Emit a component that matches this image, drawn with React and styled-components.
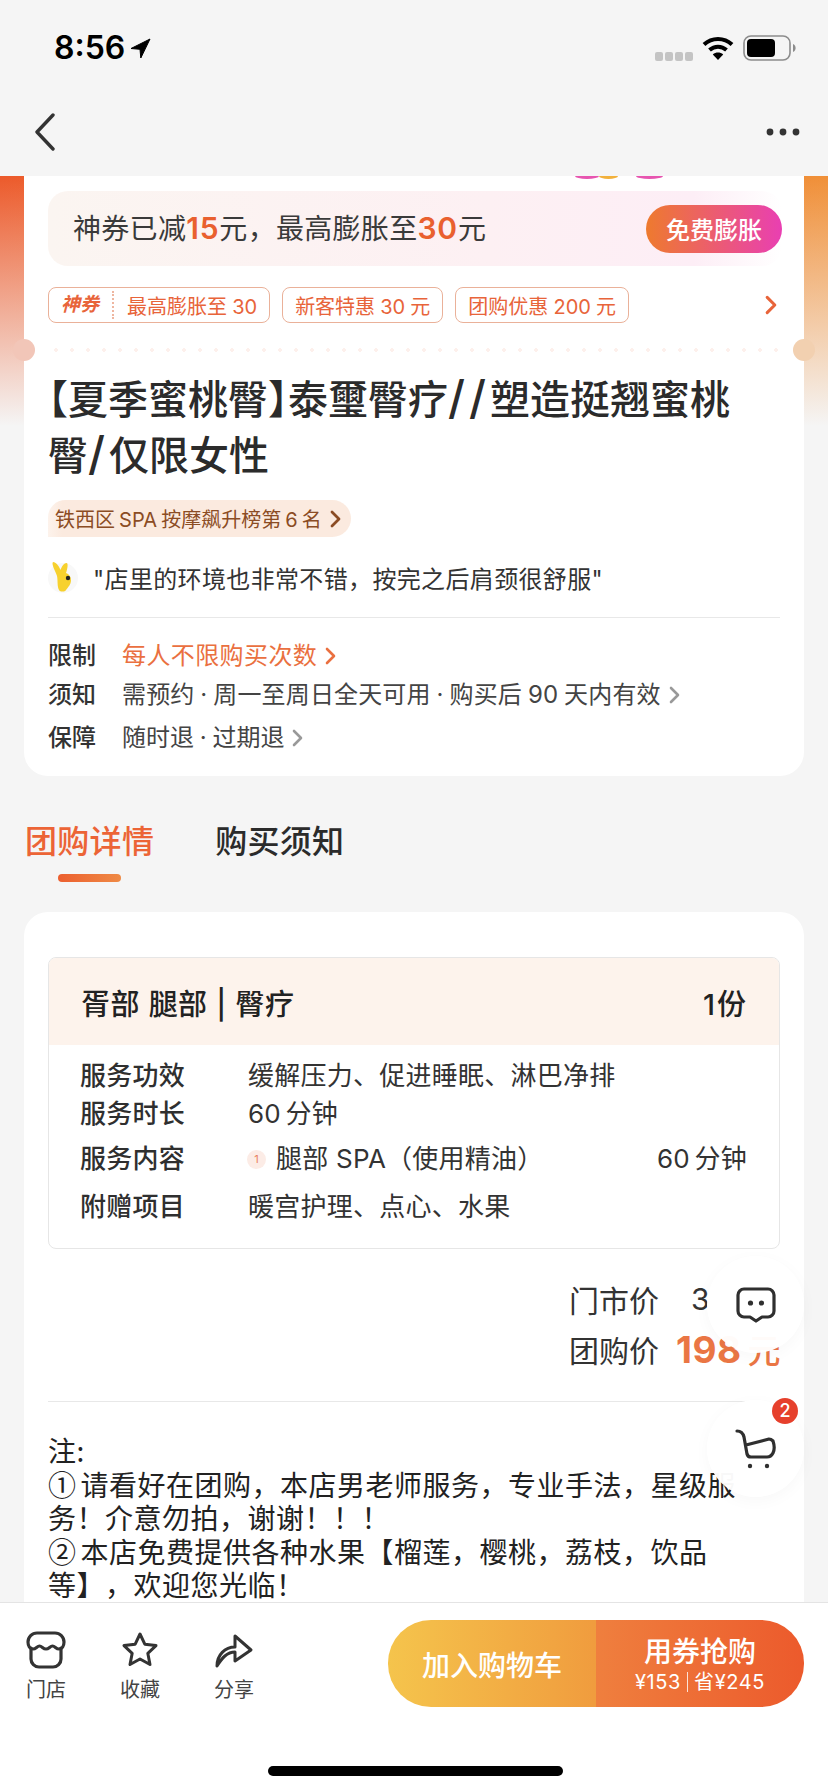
import React from "react";
import styled, { createGlobalStyle } from "styled-components";

const Global = createGlobalStyle`
  html, body { margin: 0; padding: 0; background: #f5f5f5; }
  * { box-sizing: border-box; }
  body { font-family: Inter, "Noto Sans CJK SC", sans-serif; color: #333; }
`;

const Page = styled.div`
  position: relative;
  width: 828px;
  height: 1792px;
  overflow: hidden;
  display: flex;
  flex-direction: column;
  background: #f5f5f5;
`;
const StatusBar = styled.div`
  height: 96px;
  display: flex;
  align-items: center;
  justify-content: space-between;
  padding: 0 32px 0 54px;
`;
const Time = styled.div`
  display: flex;
  align-items: center;
  gap: 5px;
  font: 600 32px/40px Inter, sans-serif;
  color: #000;
`;
const StatusIcons = styled.div`
  display: flex;
  align-items: center;
  gap: 9px;
`;
const Signal = styled.div`
  display: flex;
  gap: 2px;
  margin-top: 16px;
`;
const SignalDot = styled.span`
  width: 8px;
  height: 9px;
  border-radius: 2px;
  background: #c4c4c4;
`;
const NavBar = styled.div`
  height: 80px;
  display: flex;
  align-items: center;
  justify-content: space-between;
  padding: 0 28px 8px 34px;
`;
const Scroll = styled.div`
  flex: 1;
  min-height: 0;
  overflow: hidden;
  padding: 0 24px;
  background:
    linear-gradient(180deg, rgba(245, 245, 245, 0) 0%, #f5f5f5 100%) top / 100% 250px no-repeat,
    linear-gradient(90deg, #ec5a2b 0%, #f09038 100%) top / 100% 250px no-repeat;
`;
const Card = styled.div`
  position: relative;
  background: #fff;
  padding: 0 24px 20px;
  border-radius: 0 0 24px 24px;
`;
const Peek = styled.div`
  height: 3px;
  display: flex;
  justify-content: flex-end;
  padding-right: 117px;
  margin-bottom: 12px;
`;
const PeekBlob = styled.span`
  width: ${(p) => p.$w}px;
  height: 3px;
  border-radius: 0 0 50% 50% / 0 0 100% 100%;
  background: ${(p) => p.$c};
  margin-left: ${(p) => p.$ml || 0}px;
`;
const Banner = styled.div`
  height: 75px;
  display: flex;
  align-items: center;
  justify-content: space-between;
  padding-left: 25px;
  margin-right: -2px;
  border-radius: 20px;
  background: linear-gradient(90deg, #fbf5f1 0%, #fdf0f3 60%, #fdeef6 88%, #ffffff 100%);
`;
const BannerText = styled.div`
  font-size: 28px;
  line-height: 40px;
  letter-spacing: 0.3px;
  color: #3a3a3a;
`;
const BannerNum = styled.span`
  color: #e9602f;
  font-size: 30px;
  font-weight: 600;
  letter-spacing: 0.8px;
`;
const BannerButton = styled.div`
  width: 136px;
  height: 48px;
  border-radius: 24px;
  display: flex;
  align-items: center;
  justify-content: center;
  color: #fff;
  font-size: 24px;
  font-weight: 500;
  background: linear-gradient(90deg, #ee7a2e 0%, #e93fb2 100%);
`;
const TagRow = styled.div`
  margin-top: 21px;
  display: flex;
  align-items: center;
  gap: 12px;
`;
const Tag = styled.div`
  height: 36px;
  display: flex;
  align-items: center;
  padding: 0 12px;
  border: 1px solid #eab199;
  border-radius: 8px;
  font-size: 20px;
  word-spacing: -0.5px;
  color: #e8643a;
  white-space: nowrap;
`;
const TagBrand = styled.span`
  font-weight: 700;
  font-style: italic;
  font-size: 19px;
  margin-right: 13px;
  padding-right: 13px;
  border-right: 2px dotted #eeb6a0;
  line-height: 28px;
`;
const TagChevron = styled.div`
  margin-left: auto;
  margin-right: 3px;
  display: flex;
`;
const Perforation = styled.div`
  height: 4px;
  margin-top: 25px;
  background: radial-gradient(circle, #fdf0ec 0 2px, transparent 2px) 0 0 / 16px 4px repeat-x;
`;
const Notch = styled.span`
  position: absolute;
  top: 163px;
  width: 22px;
  height: 22px;
  border-radius: 50%;
  background: ${(p) => p.$c};
  ${(p) => (p.$right ? "right: -11px;" : "left: -11px;")}
`;
const Title = styled.h1`
  margin: 20px 0 0;
  font-size: 40px;
  line-height: 56px;
  font-weight: 500;
  font-feature-settings: "halt";
  color: #2b2b2b;
`;
const Slash = styled.span`
  font-size: 46px;
  line-height: 40px;
  letter-spacing: 4px;
`;
const RankPill = styled.div`
  margin-top: 16px;
  height: 37px;
  width: 303px;
  padding-left: 7px;
  display: flex;
  align-items: center;
  gap: 8px;
  border-radius: 18px 19px 19px 0;
  background: linear-gradient(90deg, #fdf3ec 0, #fbeadf 14px);
  color: #8b4c24;
  font-size: 20px;
  word-spacing: -1.5px;
  white-space: nowrap;
`;
const Review = styled.div`
  margin-top: 24px;
  height: 32px;
  display: flex;
  align-items: center;
  gap: 13px;
  font-size: 24px;
  letter-spacing: 0.35px;
  color: #333;
`;
const Divider = styled.div`
  height: 1px;
  background: #e8e8e8;
  margin-top: ${(p) => p.$mt}px;
  margin-right: ${(p) => p.$mr || 0}px;
`;
const InfoRow = styled.div`
  margin-top: ${(p) => p.$mt}px;
  display: grid;
  grid-template-columns: 74px auto 1fr;
  align-items: center;
  font-size: 24px;
  line-height: 36px;
  color: #333;
`;
const InfoLabel = styled.span`
  font-weight: 500;
`;
const InfoValue = styled.span`
  color: ${(p) => p.$c || "#444"};
  letter-spacing: ${(p) => p.$ls || 0}px;
  word-spacing: -1px;
  margin-right: 8px;
`;
const Tabs = styled.div`
  padding: 44px 0 0 1px;
  display: flex;
  gap: 61px;
`;
const Tab = styled.div`
  display: flex;
  flex-direction: column;
  align-items: center;
  font-size: 32px;
  line-height: 44px;
  letter-spacing: 0.3px;
  font-weight: 500;
  color: ${(p) => (p.$active ? "#ec6436" : "#2b2b2b")};
`;
const TabLine = styled.span`
  margin-top: 10px;
  width: 63px;
  height: 8px;
  border-radius: 4px;
  background: ${(p) => (p.$active ? "linear-gradient(90deg,#ec5f2f,#ef8a45)" : "transparent")};
`;
const DetailCard = styled.div`
  margin-top: 30px;
  padding: 45px 24px 0;
  background: #fff;
  border-radius: 24px 24px 0 0;
`;
const Table = styled.div`
  border: 1px solid #e6e6e6;
  border-radius: 8px;
  overflow: hidden;
  padding-bottom: 23px;
`;
const TableHead = styled.div`
  height: 87px;
  display: flex;
  align-items: center;
  justify-content: space-between;
  padding: 0 31px 0 32px;
  background: #fdf3ec;
  font-size: 29px;
  letter-spacing: 0.4px;
  word-spacing: 0.7px;
  font-weight: 500;
  color: #222;
  margin-bottom: 13px;
`;
const HeadCount = styled.span`
  letter-spacing: 2px;
`;
const TableRow = styled.div`
  margin-top: ${(p) => p.$mt || 0}px;
  padding: 0 32px 0 31px;
  display: grid;
  grid-template-columns: 168px 1fr auto;
  align-items: center;
  font-size: 26px;
  line-height: 36px;
  letter-spacing: 0.25px;
  color: #333;
`;
const RowLabel = styled.span`
  font-weight: 500;
  color: #2f2f2f;
`;
const RowContent = styled.span`
  display: flex;
  align-items: center;
  gap: 10px;
  white-space: pre;
`;
const Duration = styled.span`
  word-spacing: -3px;
`;
const NumBadge = styled.span`
  width: 19px;
  height: 19px;
  border-radius: 50%;
  margin-left: -1px;
  background: #fcece6;
  color: #e8805e;
  font-size: 11px;
  line-height: 19px;
  text-align: center;
`;
const PriceRow = styled.div`
  margin-top: ${(p) => p.$mt}px;
  height: 40px;
  display: flex;
  align-items: center;
  justify-content: flex-end;
  font-size: 30px;
  color: #333;
`;
const PriceValue = styled.span`
  width: 121px;
  padding-left: ${(p) => p.$pl}px;
  display: flex;
  align-items: baseline;
  white-space: nowrap;
`;
const PriceNow = styled.span`
  color: #ea7644;
  font-size: 37px;
  letter-spacing: 0.5px;
  font-weight: 700;
`;
const PriceUnit = styled.span`
  color: #ea7644;
  font-size: 33px;
  font-weight: 500;
  margin-left: 6px;
`;
const Note = styled.div`
  margin-top: 32px;
  width: 697px;
  font-family: "Noto Sans CJK SC", sans-serif;
  font-size: 28px;
  line-height: 33.6px;
  letter-spacing: 0.5px;
  text-spacing-trim: space-all;
  color: #222;
`;
const CircleNum = styled.span`
  margin-right: 4px;
`;
const Float = styled.div`
  position: absolute;
  right: 24px;
  top: 1256px;
  display: flex;
  flex-direction: column;
  gap: 47px;
`;
const FloatButton = styled.div`
  position: relative;
  width: 97px;
  height: 97px;
  border-radius: 50%;
  background: rgba(255, 255, 255, 0.97);
  box-shadow: 0 4px 16px rgba(0, 0, 0, 0.03);
  display: flex;
  align-items: center;
  justify-content: center;
`;
const Badge = styled.span`
  position: absolute;
  top: -2px;
  right: 6px;
  width: 26px;
  height: 26px;
  border-radius: 50%;
  background: #e6402c;
  color: #fff;
  font-size: 18px;
  font-weight: 500;
  line-height: 26px;
  text-align: center;
`;
const BottomBar = styled.div`
  flex: 0 0 190px;
  background: #fff;
  border-top: 1px solid #e4e4e4;
  padding: 17px 24px 0 26px;
  display: flex;
  flex-direction: column;
`;
const BarRow = styled.div`
  display: flex;
  justify-content: space-between;
  height: 87px;
`;
const BarItems = styled.div`
  display: flex;
  gap: 54px;
  padding-top: 10px;
`;
const BarItem = styled.div`
  width: 40px;
  display: flex;
  flex-direction: column;
  align-items: center;
  font-size: 20px;
  line-height: 28px;
  color: #444;
  white-space: nowrap;
`;
const BarIcon = styled.div`
  height: 40px;
  margin-bottom: 6px;
  display: flex;
  align-items: center;
`;
const Buy = styled.div`
  width: 416px;
  display: flex;
  border-radius: 43px;
  overflow: hidden;
  color: #fff;
`;
const BuyCart = styled.div`
  flex: 0 0 208px;
  display: flex;
  align-items: center;
  justify-content: center;
  font-size: 28px;
  font-weight: 500;
  background: linear-gradient(90deg, #f5c44c 0%, #f09c3e 100%);
`;
const BuyNow = styled.div`
  flex: 1;
  display: flex;
  flex-direction: column;
  align-items: center;
  justify-content: center;
  background: linear-gradient(90deg, #ef7f3e 0%, #ec5a2c 100%);
`;
const BuyTitle = styled.div`
  font-size: 28px;
  line-height: 36px;
  font-weight: 500;
`;
const BuySub = styled.div`
  display: flex;
  align-items: center;
  font-size: 20px;
  line-height: 24px;
  letter-spacing: 0.6px;
  white-space: nowrap;
`;
const BuySep = styled.span`
  width: 1px;
  height: 20px;
  margin: 0 6px;
  background: rgba(255, 255, 255, 0.8);
`;
const HomeIndicator = styled.div`
  align-self: center;
  margin-top: 59px;
  width: 295px;
  height: 10px;
  border-radius: 5px;
  background: #000;
`;

const Chevron = ({ c = "#999", w = 11, h = 18, sw = 2.6 }) => (
  <svg width={w} height={h} viewBox="0 0 11 18" fill="none">
    <path d="M2 2l7 7-7 7" stroke={c} strokeWidth={sw} strokeLinecap="round" strokeLinejoin="round" />
  </svg>
);
const ArrowIcon = () => (
  <svg width="21" height="21" viewBox="0 0 21 21"><path d="M20 1L1 10.500l9 .8.8 8.700z" fill="#000" stroke="#000" strokeLinejoin="round" /></svg>
);
const WifiIcon = () => (
  <svg width="32" height="26" viewBox="0 0 32 26" fill="none" stroke="#000" strokeWidth="4">
    <path d="M2 9.500c8-7.500 20-7.500 28 0" />
    <path d="M7.500 15c5-4.500 12-4.500 17 0" />
    <path d="M16 25l-5.200-5.600c3-2.400 7.400-2.400 10.400 0z" fill="#000" stroke="none" />
  </svg>
);
const BatteryIcon = () => (
  <svg width="53" height="26" viewBox="0 0 53 26">
    <rect x="1" y="1" width="46" height="24" rx="7" fill="none" stroke="#8c8c8c" strokeWidth="1.6" />
    <rect x="4" y="4" width="28" height="18" rx="4" fill="#000" />
    <path d="M50 9c2 1 2.600 2.500 2.600 4s-.6 3-2.600 4z" fill="#8c8c8c" />
  </svg>
);
const BackIcon = () => (
  <svg width="22" height="38" viewBox="0 0 22 38" fill="none">
    <path d="M19 2L3 19l16 17" stroke="#333" strokeWidth="3.400" strokeLinecap="round" strokeLinejoin="round" />
  </svg>
);
const DotsIcon = () => (
  <svg width="34" height="8" viewBox="0 0 34 8" fill="#333">
    <circle cx="4" cy="4" r="3.400" /><circle cx="17" cy="4" r="3.400" /><circle cx="30" cy="4" r="3.400" />
  </svg>
);
const Mascot = () => (
  <svg width="32" height="34" viewBox="0 0 32 34">
    <circle cx="15" cy="18" r="15" fill="#f8f8f8" />
    <path d="M5 2c3 0 6 4 7.500 8 1-3 3-7 6-7 2 0 1 6-.5 10 3 1 5 4 5 7 0 5-3 7-5 10-1 2-6 2-7 0-2-4-1-9-2-14C7.500 11 3 4 5 2z" fill="#f7d12e" />
    <circle cx="20" cy="18" r="2.200" fill="#222" />
  </svg>
);
const StoreIcon = () => (
  <svg width="40" height="38" viewBox="0 0 40 38" fill="none" stroke="#333" strokeWidth="3.200" strokeLinecap="round" strokeLinejoin="round">
    <path d="M11 2h18c5 0 9 4 9 9 0 4-2 7-5 7-3 0-4-3-6.500-3s-3.500 3-6.500 3-4-3-6.500-3-3.500 3-6.500 3c-3 0-5-3-5-7 0-5 4-9 9-9z" />
    <path d="M5 17v11a8 8 0 0 0 8 8h14a8 8 0 0 0 8-8V17" />
  </svg>
);
const StarIcon = () => (
  <svg width="38" height="38" viewBox="0 0 38 38" fill="none" stroke="#333" strokeWidth="3" strokeLinejoin="round">
    <path d="M19 3l4.800 10.200 11.200 1.400-8.200 7.700 2.200 11.200L19 28l-10 5.500 2.200-11.200L3 14.600l11.200-1.400z" />
  </svg>
);
const ShareIcon = () => (
  <svg width="40" height="38" viewBox="0 0 40 38" fill="none" stroke="#333" strokeWidth="3" strokeLinejoin="round" strokeLinecap="round">
    <path d="M3 35c0-11 8-19 18-19V5l16 14-16 11v-9C13 21 8 27 3 35z" />
  </svg>
);
const ChatIcon = () => (
  <svg width="40" height="36" viewBox="0 0 40 36" fill="none">
    <path d="M8 2h24a6 6 0 0 1 6 6v16a6 6 0 0 1-6 6h-6l-6 4-6-4H8a6 6 0 0 1-6-6V8a6 6 0 0 1 6-6z" stroke="#2f2f2f" strokeWidth="3.200" strokeLinejoin="round" />
    <circle cx="14.500" cy="16" r="2.600" fill="#2f2f2f" /><circle cx="25.500" cy="16" r="2.600" fill="#2f2f2f" />
  </svg>
);
const CartIcon = () => (
  <svg width="42" height="42" viewBox="0 0 42 42" fill="none" stroke="#2f2f2f" strokeWidth="3.200" strokeLinecap="round" strokeLinejoin="round">
    <path d="M2 3c4 0 6 2 7 6l3 17c.5 2 2 3 4 3h16c3 0 5-2 6-4 2-4 1-9 0-12-1-1-2-2-4-2L11 17" />
    <circle cx="15" cy="38" r="2.200" fill="#2f2f2f" stroke="none" />
    <circle cx="32" cy="38" r="2.200" fill="#2f2f2f" stroke="none" />
  </svg>
);

export default function App() {
  return (
    <Page>
      <Global />
      <StatusBar>
        <Time>8:56<ArrowIcon /></Time>
        <StatusIcons>
          <Signal><SignalDot /><SignalDot /><SignalDot /><SignalDot /></Signal>
          <WifiIcon />
          <BatteryIcon />
        </StatusIcons>
      </StatusBar>
      <NavBar><BackIcon /><DotsIcon /></NavBar>
      <Scroll>
        <Card>
          <Notch $c="#f2c6b8" />
          <Notch $right $c="#f2d0b0" />
          <Peek>
            <PeekBlob $w={24} $c="#e755b0" />
            <PeekBlob $w={19} $c="#f2b13c" />
            <PeekBlob $w={27} $c="#e755b0" $ml={18} />
          </Peek>
          <Banner>
            <BannerText>神券已减<BannerNum>15</BannerNum>元，最高膨胀至<BannerNum>30</BannerNum>元</BannerText>
            <BannerButton>免费膨胀</BannerButton>
          </Banner>
          <TagRow>
            <Tag><TagBrand>神券</TagBrand>最高膨胀至 30</Tag>
            <Tag>新客特惠 30 元</Tag>
            <Tag>团购优惠 200 元</Tag>
            <TagChevron><Chevron c="#e8643a" w={12} h={20} sw={2.8} /></TagChevron>
          </TagRow>
          <Perforation />
          <Title>【夏季蜜桃臀】泰璽臀疗<Slash>//</Slash>塑造挺翘蜜桃<br />臀<Slash>/</Slash>仅限女性</Title>
          <RankPill>铁西区 SPA 按摩飙升榜第 6 名<Chevron c="#8b4c24" w={11} h={18} sw={2.8} /></RankPill>
          <Review><Mascot />"店里的环境也非常不错，按完之后肩颈很舒服"</Review>
          <Divider $mt={24} />
          <InfoRow $mt={20}><InfoLabel>限制</InfoLabel><InfoValue $c="#ea7040" $ls={0.4}>每人不限购买次数</InfoValue><Chevron c="#ea7040" /></InfoRow>
          <InfoRow $mt={3}><InfoLabel>须知</InfoLabel><InfoValue $ls={0.15}>需预约 · 周一至周日全天可用 · 购买后 90 天内有效</InfoValue><Chevron /></InfoRow>
          <InfoRow $mt={7}><InfoLabel>保障</InfoLabel><InfoValue>随时退 · 过期退</InfoValue><Chevron /></InfoRow>
        </Card>
        <Tabs>
          <Tab $active>团购详情<TabLine $active /></Tab>
          <Tab>购买须知<TabLine /></Tab>
        </Tabs>
        <DetailCard>
          <Table>
            <TableHead><span>胥部 腿部 | 臀疗</span><HeadCount>1份</HeadCount></TableHead>
            <TableRow><RowLabel>服务功效</RowLabel><span>缓解压力、促进睡眠、淋巴净排</span></TableRow>
            <TableRow $mt={2}><RowLabel>服务时长</RowLabel><Duration>60 分钟</Duration></TableRow>
            <TableRow $mt={9}><RowLabel>服务内容</RowLabel><RowContent><NumBadge>1</NumBadge>腿部 SPA（使用精油）</RowContent><Duration>60 分钟</Duration></TableRow>
            <TableRow $mt={12}><RowLabel>附赠项目</RowLabel><span>暖宫护理、点心、水果</span></TableRow>
          </Table>
          <PriceRow $mt={30}><span>门市价</span><PriceValue $pl={32}>3</PriceValue></PriceRow>
          <PriceRow $mt={10}><span>团购价</span><PriceValue $pl={17}><PriceNow>198</PriceNow><PriceUnit>元</PriceUnit></PriceValue></PriceRow>
          <Divider $mt={32} $mr={35} />
          <Note>
            注:<br />
            <CircleNum>①</CircleNum>请看好在团购，本店男老师服务，专业手法，星级服务！介意勿拍，谢谢！！！<br />
            <CircleNum>②</CircleNum>本店免费提供各种水果【榴莲，樱桃，荔枝，饮品等】，欢迎您光临！
          </Note>
        </DetailCard>
      </Scroll>
      <Float>
        <FloatButton><ChatIcon /></FloatButton>
        <FloatButton><CartIcon /><Badge>2</Badge></FloatButton>
      </Float>
      <BottomBar>
        <BarRow>
          <BarItems>
            <BarItem><BarIcon><StoreIcon /></BarIcon>门店</BarItem>
            <BarItem><BarIcon><StarIcon /></BarIcon>收藏</BarItem>
            <BarItem><BarIcon><ShareIcon /></BarIcon>分享</BarItem>
          </BarItems>
          <Buy>
            <BuyCart>加入购物车</BuyCart>
            <BuyNow>
              <BuyTitle>用券抢购</BuyTitle>
              <BuySub>¥153<BuySep />省¥245</BuySub>
            </BuyNow>
          </Buy>
        </BarRow>
        <HomeIndicator />
      </BottomBar>
    </Page>
  );
}
